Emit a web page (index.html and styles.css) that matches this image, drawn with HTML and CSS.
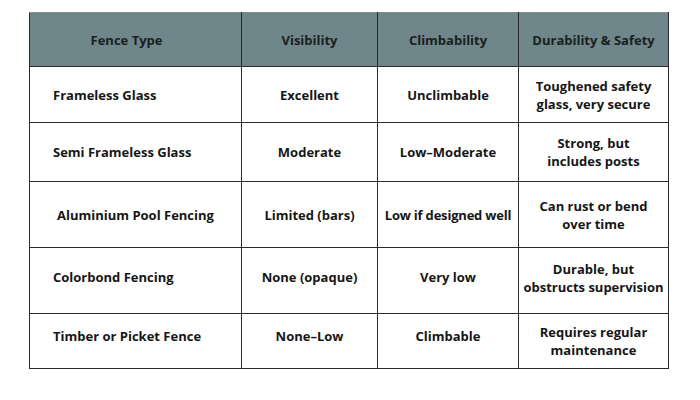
FILE: index.html
```html
<!DOCTYPE html>
<html>
<head>
<meta charset="utf-8">
<link rel="stylesheet" href="styles.css">
</head>
<body>
<table class="fence-table">
  <colgroup>
    <col class="c1"><col class="c2"><col class="c3"><col class="c4">
  </colgroup>
  <thead>
    <tr class="head-row">
      <th class="type-head">Fence Type</th>
      <th>Visibility</th>
      <th>Climbability</th>
      <th>Durability &amp; Safety</th>
    </tr>
  </thead>
  <tbody>
    <tr class="r1">
      <td class="type">Frameless Glass</td>
      <td>Excellent</td>
      <td>Unclimbable</td>
      <td>Toughened safety<br>glass, very secure</td>
    </tr>
    <tr class="r2">
      <td class="type">Semi Frameless Glass</td>
      <td>Moderate</td>
      <td>Low–Moderate</td>
      <td>Strong, but<br>includes posts</td>
    </tr>
    <tr class="r3">
      <td class="type indent">Aluminium Pool Fencing</td>
      <td>Limited (bars)</td>
      <td class="tight">Low if designed well</td>
      <td>Can rust or bend<br>over time</td>
    </tr>
    <tr class="r4">
      <td class="type">Colorbond Fencing</td>
      <td>None (opaque)</td>
      <td>Very low</td>
      <td>Durable, but<br>obstructs supervision</td>
    </tr>
    <tr class="r5">
      <td class="type">Timber or Picket Fence</td>
      <td>None–Low</td>
      <td>Climbable</td>
      <td>Requires regular<br>maintenance</td>
    </tr>
  </tbody>
</table>
</body>
</html>
```

FILE: styles.css
```css
html, body {
  margin: 0;
  padding: 0;
  background: #ffffff;
}
body {
  padding: 12px 0 0 29px;
  font-family: "Open Sans", "Liberation Sans", sans-serif;
  color: #161616;
}
.fence-table {
  border-collapse: collapse;
  table-layout: fixed;
  width: 639px;
  font-size: 13px;
  font-weight: 700;
  line-height: 18px;
}
.c1 { width: 212px; }
.c2 { width: 136px; }
.c3 { width: 141px; }
.c4 { width: 150px; }
.fence-table th,
.fence-table td {
  border: 1px solid #2a2a2a;
  padding: 0 2px;
  text-align: center;
  vertical-align: middle;
}
.fence-table thead th {
  border-top-color: #8a8a8a;
}
.head-row {
  height: 54px;
  background: #6f868a;
}
.fence-table th {
  font-weight: 700;
  color: #1a1f20;
}
.fence-table th.type-head {
  padding-right: 20px;
}
.fence-table td.type {
  text-align: left;
  padding-left: 23px;
}
.fence-table td.indent {
  padding-left: 27px;
}
.fence-table td.tight {
  padding: 0;
  white-space: nowrap;
  letter-spacing: -0.2px;
}
.r1 { height: 56px; }
.r2 { height: 59px; }
.r3 { height: 66px; }
.r4 { height: 66px; }
.r5 { height: 55px; }
.fence-table .r4 td { padding-bottom: 8px; }
.fence-table .r5 td { padding-bottom: 10px; }
.fence-table .r4 td:last-child { padding-bottom: 5px; }
.fence-table .r5 td:last-child { padding-bottom: 1px; }
```
